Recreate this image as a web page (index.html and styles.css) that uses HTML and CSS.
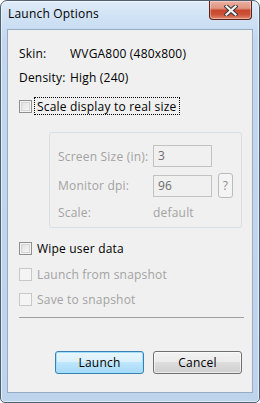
FILE: index.html
```html
<!DOCTYPE html>
<html>
<head>
<meta charset="utf-8">
<link rel="stylesheet" href="styles.css">
</head>
<body>
<div class="window">
  <div class="titlebar">
    <span class="title">Launch Options</span>
    <div class="close">
      <svg width="14" height="11" viewBox="0 0 14 11">
        <path d="M2.5 1.5 L11.5 9.5 M11.5 1.5 L2.5 9.5" stroke="#3a3a3a" stroke-width="4.2" stroke-linecap="square" fill="none"/>
        <path d="M2.5 1.5 L11.5 9.5 M11.5 1.5 L2.5 9.5" stroke="#f4f4f4" stroke-width="2.2" stroke-linecap="square" fill="none"/>
      </svg>
    </div>
  </div>
  <div class="client">
    <div class="info"><span class="key">Skin:</span><span>WVGA800 (480x800)</span></div>
    <div class="info second"><span class="key">Density:</span><span>High (240)</span></div>
    <div class="check first-check"><span class="box"></span><span class="label focus">Scale display to real size</span></div>
    <div class="group">
      <div class="grow"><span class="glabel">Screen Size (in):</span><span class="edit">3</span></div>
      <div class="grow mid"><span class="glabel">Monitor dpi:</span><span class="edit">96</span><span class="qbtn">?</span></div>
      <div class="grow last"><span class="glabel">Scale:</span><span class="gval">default</span></div>
    </div>
    <div class="check wipe"><span class="box"></span><span class="label">Wipe user data</span></div>
    <div class="check disabled snap1"><span class="box"></span><span class="label">Launch from snapshot</span></div>
    <div class="check disabled snap2"><span class="box"></span><span class="label">Save to snapshot</span></div>
    <div class="sep"></div>
    <div class="buttons">
      <div class="btn default">Launch</div>
      <div class="btn">Cancel</div>
    </div>
  </div>
</div>
</body>
</html>
```
FILE: styles.css
```css
* { box-sizing: border-box; }
html, body { margin: 0; padding: 0; background: #ffffff; }
body {
  font-family: "Open Sans", "Noto Sans", sans-serif;
  font-size: 12px;
  letter-spacing: 0.2px;
  color: #000;
}
.window {
  width: 260px;
  height: 403px;
  border: 1px solid #4f6072;
  border-radius: 7px 7px 5px 5px;
  background: linear-gradient(to bottom, #dfebf8 0px, #cde0f4 20px, #c3d8ef 40px, #bed4ec 100%);
  box-shadow: inset 0 0 0 1px rgba(255,255,255,0.55);
  display: flex;
  flex-direction: column;
  overflow: hidden;
}
.titlebar {
  height: 28px;
  display: flex;
  justify-content: space-between;
  align-items: flex-start;
  padding-left: 7px;
}
.title {
  margin-top: 5px;
  line-height: 16px;
  font-size: 12px;
  color: #000;
}
.close {
  width: 43px;
  height: 19px;
  margin-right: 7px;
  border: 1px solid #5b2218;
  border-top: none;
  border-radius: 0 0 4px 4px;
  background: linear-gradient(to bottom, #eab0a2 0%, #df9582 40%, #c9472f 52%, #cc5238 75%, #e08a70 100%);
  box-shadow: inset 0 0 0 1px rgba(255,255,255,0.35);
  display: flex;
  align-items: center;
  justify-content: center;
}
.close svg { display: block; }
.client {
  margin: 0 6px 0 6px;
  height: 364px;
  border: 1px solid #97abc3;
  background: #f0f0f0;
  padding: 16px 8px 0 11px;
  display: flex;
  flex-direction: column;
}
.info {
  height: 16px;
  line-height: 16px;
  display: flex;
}
.info .key { width: 51px; }
.info.second { margin-top: 8px; }
.check {
  height: 18px;
  display: flex;
  align-items: center;
}
.box {
  width: 13px;
  height: 13px;
  border: 1px solid #8e8f8f;
  background: linear-gradient(135deg, #dcdcdc, #fbfbfb);
  box-shadow: inset 0 0 0 1px #f4f4f4, inset 0 0 0 2px #d6d6d6;
}
.label {
  margin-left: 2px;
  padding: 0 2px;
  height: 18px;
  line-height: 17px;
  border: 1px solid transparent;
}
.label.focus { border: 1px dotted #000; }
.first-check { margin-top: 11px; }
.wipe { margin-top: 11px; }
.snap1 { margin-top: 8px; }
.snap2 { margin-top: 7px; }
.disabled { color: #a3a3a3; }
.disabled .box {
  border-color: #c8c8c8;
  background: #f4f4f4;
  box-shadow: none;
}
.group {
  margin-top: 17px;
  margin-left: 30px;
  width: 193px;
  height: 96px;
  border: 1px solid #d5dfe5;
  border-radius: 3px;
  padding: 12px 0 0 8px;
  color: #a3a3a3;
}
.grow {
  display: flex;
  align-items: center;
  min-height: 22px;
}
.grow.mid { margin-top: 6px; min-height: 25px; }
.grow.last { margin-top: 7px; min-height: 16px; line-height: 16px; }
.glabel { width: 95px; }
.edit {
  width: 59px;
  height: 22px;
  border: 1px solid #c2c2c2;
  background: #f0f0f0;
  color: #6d6d6d;
  line-height: 20px;
  padding-left: 4px;
}
.qbtn {
  margin-left: 6px;
  width: 15px;
  height: 25px;
  border: 1px solid #b9bcbf;
  border-radius: 3px;
  background: #f4f4f4;
  color: #8a8a8a;
  text-align: center;
  line-height: 23px;
}
.sep {
  margin-top: 9px;
  height: 1px;
  background: #a0a0a0;
}
.buttons {
  margin-top: 33px;
  display: flex;
  justify-content: flex-end;
  gap: 9px;
  padding-right: 2px;
}
.btn {
  width: 89px;
  height: 23px;
  border: 1px solid #707070;
  border-radius: 3px;
  background: linear-gradient(to bottom, #f2f2f2 0%, #ebebeb 49%, #dddddd 50%, #cfcfcf 100%);
  box-shadow: inset 0 0 0 1px rgba(255,255,255,0.6);
  text-align: center;
  line-height: 21px;
}
.btn.default {
  border-color: #3c7fb1;
  background: linear-gradient(to bottom, #eaf6fd 0%, #d9f0fc 49%, #bee6fd 50%, #a7d9f5 100%);
  box-shadow: inset 0 0 0 1px #9ee0ff;
}
```
